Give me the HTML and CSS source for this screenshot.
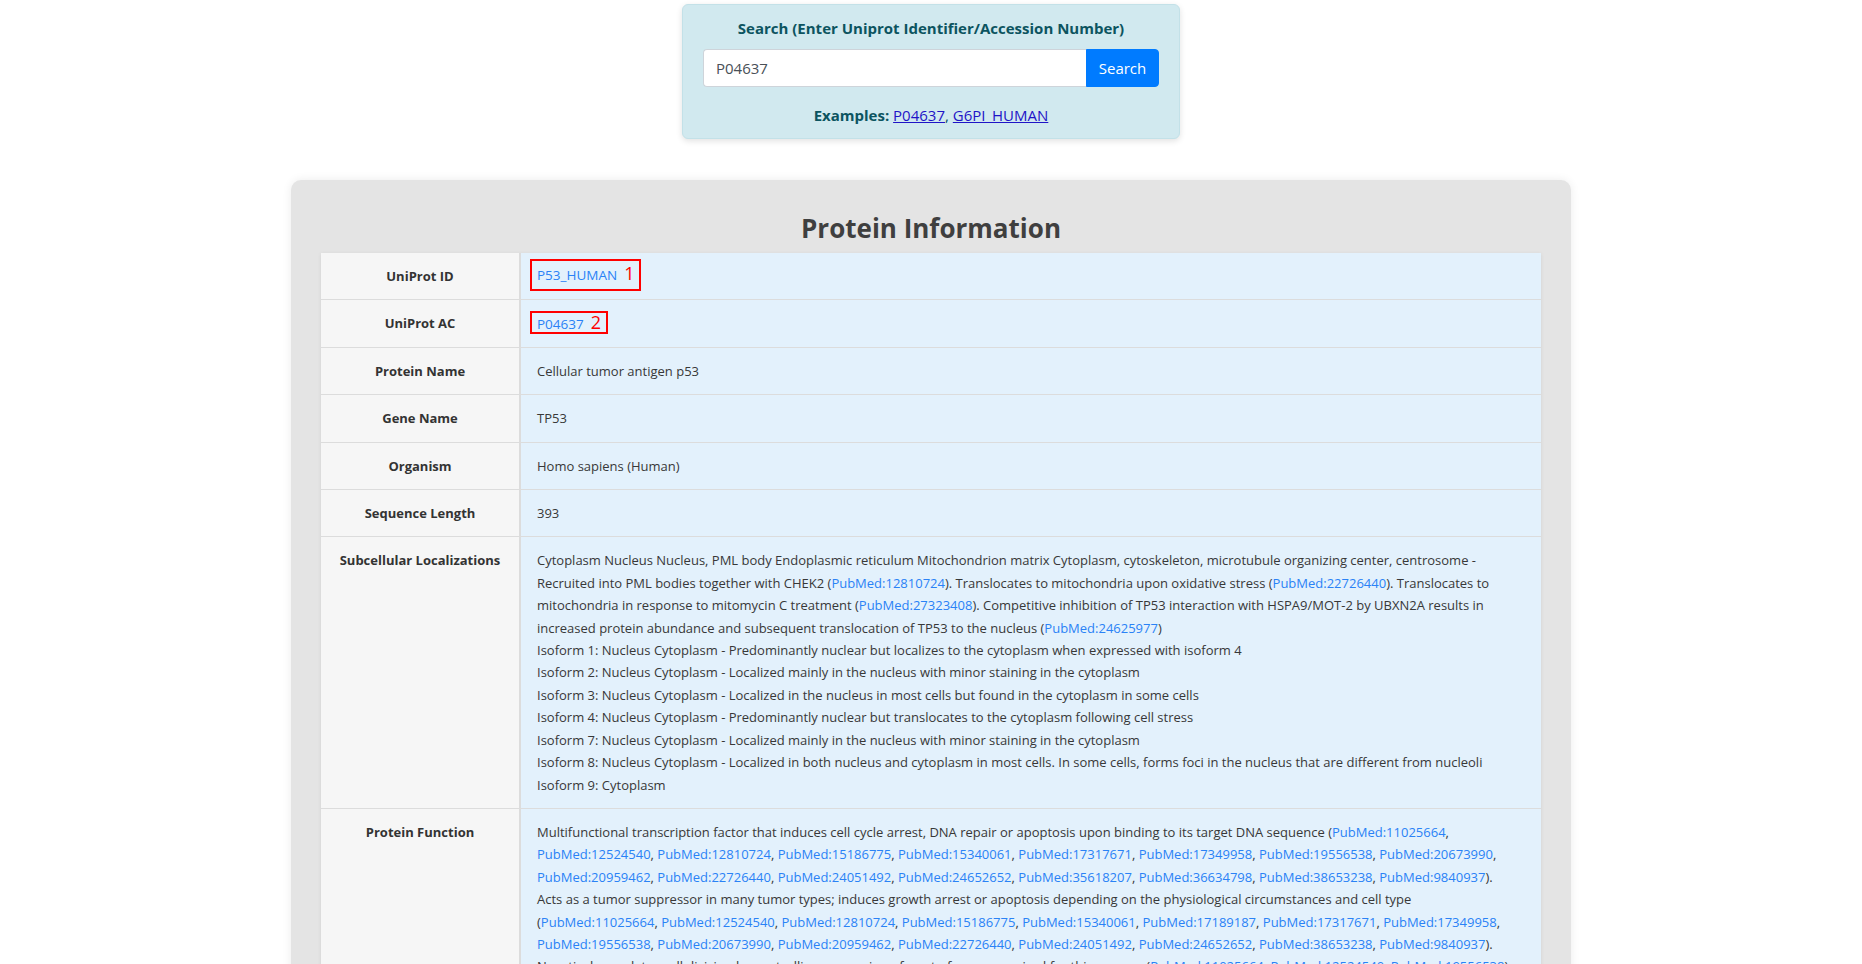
FILE: index.html
```html
<!DOCTYPE html>
<html lang="en">
<head>
<meta charset="utf-8">
<title>Protein Information</title>
<link rel="stylesheet" href="styles.css">
</head>
<body>
<div class="page">
  <div class="search-box">
    <div class="search-title">Search (Enter Uniprot Identifier/Accession Number)</div>
    <form class="search-form">
      <input class="search-input" type="text" value="P04637">
      <button class="search-btn" type="button">Search</button>
    </form>
    <div class="examples"><b>Examples:</b> <a href="#">P04637</a>, <a href="#">G6PI_HUMAN</a></div>
  </div>

  <div class="card">
    <h2 class="card-title">Protein Information</h2>
    <table class="info">
      <colgroup><col class="col-label"><col></colgroup>
      <tr>
        <th>UniProt ID</th>
        <td><span class="mark mark-tall"><a class="lnk" href="#">P53_HUMAN</a><span class="mark-num">1</span></span></td>
      </tr>
      <tr>
        <th>UniProt AC</th>
        <td><span class="mark mark-short"><a class="lnk" href="#">P04637</a><span class="mark-num">2</span></span></td>
      </tr>
      <tr><th>Protein Name</th><td>Cellular tumor antigen p53</td></tr>
      <tr><th>Gene Name</th><td>TP53</td></tr>
      <tr><th>Organism</th><td>Homo sapiens (Human)</td></tr>
      <tr><th>Sequence Length</th><td>393</td></tr>
      <tr>
        <th>Subcellular Localizations</th>
        <td>Cytoplasm Nucleus Nucleus, PML body Endoplasmic reticulum Mitochondrion matrix Cytoplasm, cytoskeleton, microtubule organizing center, centrosome - Recruited into PML bodies together with CHEK2 (<a class="lnk" href="#">PubMed:12810724</a>). Translocates to mitochondria upon oxidative stress (<a class="lnk" href="#">PubMed:22726440</a>). Translocates to mitochondria in response to mitomycin C treatment (<a class="lnk" href="#">PubMed:27323408</a>). Competitive inhibition of TP53 interaction with HSPA9/MOT-2 by UBXN2A results in increased protein abundance and subsequent translocation of TP53 to the nucleus (<a class="lnk" href="#">PubMed:24625977</a>)<br>
Isoform 1: Nucleus Cytoplasm - Predominantly nuclear but localizes to the cytoplasm when expressed with isoform 4<br>
Isoform 2: Nucleus Cytoplasm - Localized mainly in the nucleus with minor staining in the cytoplasm<br>
Isoform 3: Nucleus Cytoplasm - Localized in the nucleus in most cells but found in the cytoplasm in some cells<br>
Isoform 4: Nucleus Cytoplasm - Predominantly nuclear but translocates to the cytoplasm following cell stress<br>
Isoform 7: Nucleus Cytoplasm - Localized mainly in the nucleus with minor staining in the cytoplasm<br>
Isoform 8: Nucleus Cytoplasm - Localized in both nucleus and cytoplasm in most cells. In some cells, forms foci in the nucleus that are different from nucleoli<br>
Isoform 9: Cytoplasm</td>
      </tr>
      <tr>
        <th>Protein Function</th>
        <td>Multifunctional transcription factor that induces cell cycle arrest, DNA repair or apoptosis upon binding to its target DNA sequence (<a class="lnk" href="#">PubMed:11025664</a>, <a class="lnk" href="#">PubMed:12524540</a>, <a class="lnk" href="#">PubMed:12810724</a>, <a class="lnk" href="#">PubMed:15186775</a>, <a class="lnk" href="#">PubMed:15340061</a>, <a class="lnk" href="#">PubMed:17317671</a>, <a class="lnk" href="#">PubMed:17349958</a>, <a class="lnk" href="#">PubMed:19556538</a>, <a class="lnk" href="#">PubMed:20673990</a>, <a class="lnk" href="#">PubMed:20959462</a>, <a class="lnk" href="#">PubMed:22726440</a>, <a class="lnk" href="#">PubMed:24051492</a>, <a class="lnk" href="#">PubMed:24652652</a>, <a class="lnk" href="#">PubMed:35618207</a>, <a class="lnk" href="#">PubMed:36634798</a>, <a class="lnk" href="#">PubMed:38653238</a>, <a class="lnk" href="#">PubMed:9840937</a>).<br>
Acts as a tumor suppressor in many tumor types; induces growth arrest or apoptosis depending on the physiological circumstances and cell type (<a class="lnk" href="#">PubMed:11025664</a>, <a class="lnk" href="#">PubMed:12524540</a>, <a class="lnk" href="#">PubMed:12810724</a>, <a class="lnk" href="#">PubMed:15186775</a>, <a class="lnk" href="#">PubMed:15340061</a>, <a class="lnk" href="#">PubMed:17189187</a>, <a class="lnk" href="#">PubMed:17317671</a>, <a class="lnk" href="#">PubMed:17349958</a>, <a class="lnk" href="#">PubMed:19556538</a>, <a class="lnk" href="#">PubMed:20673990</a>, <a class="lnk" href="#">PubMed:20959462</a>, <a class="lnk" href="#">PubMed:22726440</a>, <a class="lnk" href="#">PubMed:24051492</a>, <a class="lnk" href="#">PubMed:24652652</a>, <a class="lnk" href="#">PubMed:38653238</a>, <a class="lnk" href="#">PubMed:9840937</a>).<br>
Negatively regulates cell division by controlling expression of a set of genes required for this process (<a class="lnk" href="#">PubMed:11025664</a>, <a class="lnk" href="#">PubMed:12524540</a>, <a class="lnk" href="#">PubMed:19556538</a>). One of the activated genes is an inhibitor of cyclin-dependent kinases.</td>
      </tr>
    </table>
  </div>
</div>
</body>
</html>
```

FILE: styles.css
```css
* { box-sizing: border-box; }

html, body {
  margin: 0;
  padding: 0;
  background: #ffffff;
}

body {
  font-family: "Open Sans", "Noto Sans", Arial, sans-serif;
  font-size: 13px;
  color: #333333;
}

.page {
  padding-top: 4px;
}

/* Search box */
.search-box {
  width: 498px;
  margin: 0 auto;
  padding: 12px 20px 12px;
  background: #d1e9ef;
  border: 1px solid #c3e1e8;
  border-radius: 6px;
  box-shadow: 0 2px 6px rgba(0, 0, 0, 0.12);
  color: #0c5460;
  text-align: center;
}

.search-title {
  font-weight: 700;
  font-size: 15px;
  line-height: 22px;
  margin-bottom: 10px;
}

.search-form {
  display: flex;
  margin: 0;
}

.search-input {
  flex: 1;
  height: 38px;
  padding: 6px 12px;
  font-family: inherit;
  font-size: 15px;
  color: #495057;
  background: #fff;
  border: 1px solid #ced4da;
  border-right: 0;
  border-radius: 4px 0 0 4px;
  outline: none;
}

.search-btn {
  width: 73px;
  height: 38px;
  font-family: inherit;
  font-size: 15px;
  color: #fff;
  background: #007bff;
  border: 1px solid #007bff;
  border-radius: 0 4px 4px 0;
  padding: 0;
}

.examples {
  margin-top: 17px;
  font-size: 15px;
  line-height: 22px;
}

.examples a {
  color: #1f14c7;
  text-decoration: underline;
}

/* Card */
.card {
  width: 1280px;
  margin: 41px auto 0;
  padding: 31px 30px 30px;
  background: #e4e4e4;
  border-radius: 10px;
  box-shadow: 0 0 10px rgba(0, 0, 0, 0.08);
}

.card-title {
  margin: 0 0 8px;
  text-align: center;
  font-size: 26px;
  line-height: 34px;
  font-weight: 700;
  color: #3f3f3f;
}

.info {
  width: 100%;
  border-collapse: collapse;
  table-layout: fixed;
  box-shadow: 0 1px 4px rgba(0, 0, 0, 0.08);
}

.col-label {
  width: 199px;
}

.info th,
.info td {
  padding: 12px 16px;
  line-height: 22.4px;
  vertical-align: top;
  border-top: 1px solid #dcdcdc;
}

.info tr:first-child th,
.info tr:first-child td {
  border-top: 0;
}

.info th {
  background: #f6f6f6;
  font-weight: 700;
  text-align: center;
  color: #333;
  border-right: 2px solid #dcdcdc;
}

.info td {
  background: #e3f1fc;
  text-align: left;
  color: #383838;
}

.lnk {
  color: #2a82f6;
  text-decoration: none;
}

/* Annotation marks */
.mark {
  display: inline-block;
  vertical-align: top;
  border: 2px solid #ff0000;
  padding: 0 5px 0 5px;
  margin-left: -7px;
}

.mark .lnk {
  font-size: 13.5px;
}

.mark-tall {
  height: 32px;
  line-height: 22px;
  padding-top: 3px;
  padding-bottom: 3px;
  margin-top: -6px;
  margin-bottom: -4px;
}

.mark-short {
  height: 23px;
  line-height: 19px;
  margin-top: -1px;
  margin-bottom: 0;
}

.mark-num {
  color: #ff0000;
  font-size: 18px;
  line-height: 1;
  margin-left: 7px;
}
```
